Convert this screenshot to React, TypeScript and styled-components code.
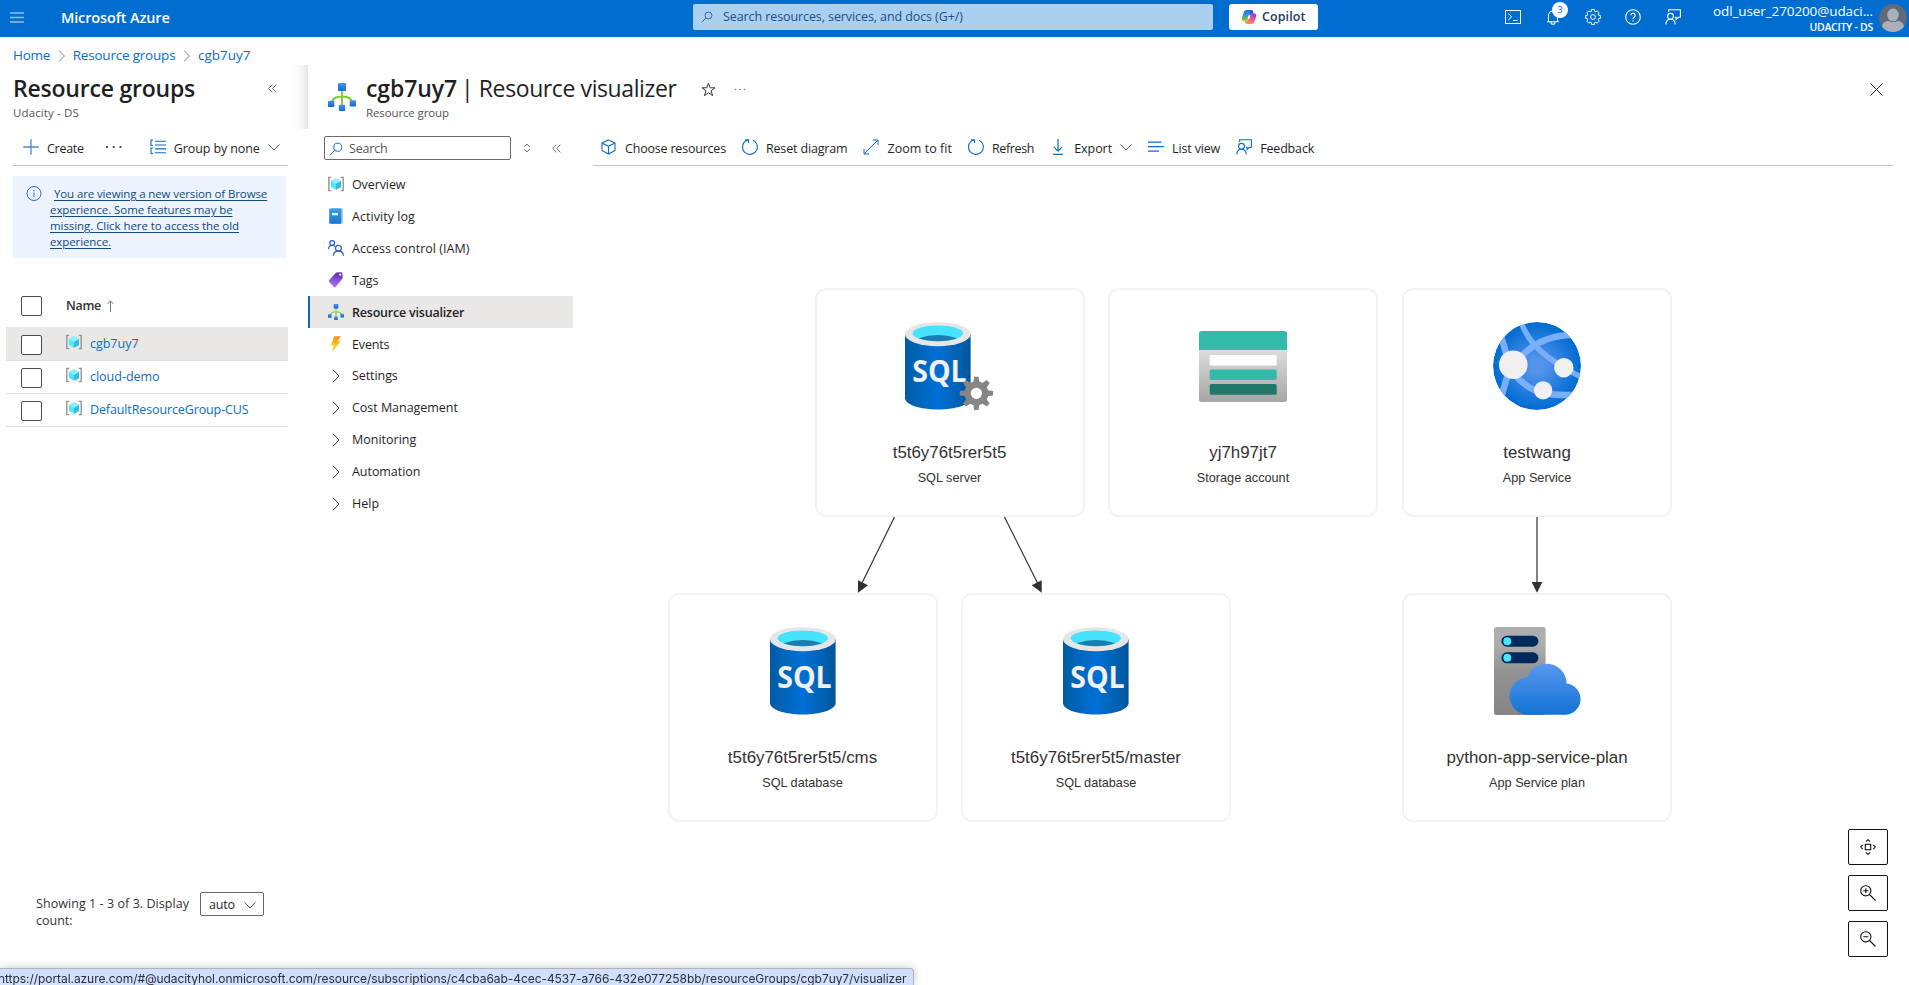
import React from 'react';
import styled, { createGlobalStyle, css } from 'styled-components';

const blue = '#006dd0';
const link = '#0a6cc9';
const ink = '#1f1f1f';
const ui = "'Open Sans', 'Noto Sans', sans-serif";

const Global = createGlobalStyle`
  *, *::before, *::after { box-sizing: border-box; }
  body { margin: 0; background: #fff; color: ${ink}; font: 12.5px/16px ${ui}; overflow: hidden; }
  svg { display: block; flex: none; }
`;

/* ---------- layout ---------- */

const Page = styled.div`
  display: flex;
  flex-direction: column;
  height: 100vh;
  min-height: 985px;
  overflow: hidden;
`;

const Label = styled.span<{ $track?: number }>`
  white-space: nowrap;
  letter-spacing: ${(p) => p.$track ?? 0}px;
`;

/* ---------- top bar ---------- */

const TopBar = styled.header`
  flex: none;
  display: grid;
  grid-template-columns: 693px 520px 1fr;
  height: 37px;
  background: ${blue};
  color: #fff;
`;

const BrandArea = styled.div`
  display: flex;
  align-items: center;
  padding: 0 0 2px 10px;
  gap: 37px;
`;

const Brand = styled(Label)`
  font-size: 14.5px;
  font-weight: 600;
  line-height: 20px;
`;

const GlobalSearch = styled.div`
  display: flex;
  align-items: center;
  gap: 10px;
  height: 26px;
  margin-top: 4px;
  padding-left: 8px;
  border-radius: 2px;
  background: #a9d0f0;
  color: #1c4f86;
`;

const TopActions = styled.div`
  display: flex;
  align-items: flex-start;
  padding: 4px 3px 0 16px;
`;

const CopilotButton = styled.div`
  display: flex;
  align-items: center;
  gap: 5px;
  width: 89px;
  height: 26px;
  padding-left: 12px;
  border-radius: 3px;
  background: #fff;
  color: #243a5e;
  font-weight: 600;
`;

const IconStrip = styled.div`
  display: flex;
  gap: 24px;
  margin: 5px 32px 0 187px;
`;

const BellSlot = styled.div`
  position: relative;
`;

const Badge = styled.span`
  position: absolute;
  left: 7px;
  top: -7px;
  width: 16px;
  height: 16px;
  border-radius: 50%;
  background: #fff;
  color: ${blue};
  font-size: 9.5px;
  line-height: 15px;
  text-align: center;
`;

const Account = styled.div`
  flex: 1;
  display: flex;
  flex-direction: column;
  align-items: flex-end;
  margin: -2px 6px 0 0;
`;

const UserName = styled(Label)`
  font-size: 13.5px;
  line-height: 18px;
`;

const Tenant = styled(Label)`
  font-size: 10.5px;
  font-weight: 600;
  line-height: 14px;
`;

/* ---------- breadcrumb ---------- */

const Breadcrumb = styled.nav`
  flex: none;
  display: flex;
  align-items: center;
  height: 28px;
  padding: 8px 0 0 13px;
  color: ${link};
  font-size: 13.5px;
`;

const CrumbArrow = styled.svg`
  margin: 1px 7px 0 7.500px;
`;

/* ---------- blades ---------- */

const Blades = styled.main`
  flex: 1;
  display: grid;
  grid-template-columns: 308px 1fr;
  min-height: 0;
`;

const Blade = styled.section`
  display: flex;
  flex-direction: column;
  min-width: 0;
`;

const BladeHeader = styled.div<{ $shade?: boolean }>`
  flex: none;
  display: flex;
  height: 64px;
  padding: 8px 0 0 13px;
  ${(p) =>
    p.$shade &&
    css`
      background: linear-gradient(to left, #e4e4e4, #f4f4f4 5px, #fcfcfc 11px, #fff 16px);
    `}
`;

const TitleBlock = styled.div`
  display: flex;
  flex-direction: column;
`;

const Title = styled.h1`
  display: flex;
  gap: 4px;
  margin: 0;
  font-size: 23px;
  font-weight: 600;
  line-height: 31px;
`;

const TitleLight = styled(Label)`
  font-weight: 400;
`;

const Subtitle = styled(Label)`
  margin-top: 1px;
  color: #555;
  font-size: 11.5px;
  line-height: 16px;
`;

const HeaderGlyph = styled.svg<{ $left?: string; $top?: number }>`
  margin-left: ${(p) => p.$left ?? '0'};
  margin-top: ${(p) => p.$top ?? 0}px;
`;

const CommandBar = styled.div<{ $inset?: boolean }>`
  flex: none;
  display: flex;
  align-items: center;
  height: 37px;
  border-bottom: 1px solid #c3c3c3;
  ${(p) =>
    p.$inset
      ? css`
          width: 275px;
          margin-left: 13px;
          padding-left: 10px;
        `
      : css`
          gap: 16px;
          margin-right: 16px;
          padding-left: 8px;
        `}
`;

const Command = styled.div<{ $gap?: number; $indent?: number }>`
  display: flex;
  align-items: center;
  gap: ${(p) => p.$gap ?? 8}px;
  margin-left: ${(p) => p.$indent ?? 0}px;
`;

const CommandLabel = styled(Label)`
  padding-top: 3px;
`;

/* ---------- resource group list ---------- */

const Banner = styled.div`
  flex: none;
  display: flex;
  gap: 8px;
  width: 273px;
  height: 82px;
  margin: 10px 0 0 13px;
  padding: 10px 0 0 13px;
  background: #eef4ff;
`;

const BannerText = styled.a`
  display: flex;
  flex-direction: column;
  color: #0f4a80;
  font-size: 11.5px;
  line-height: 16px;
  text-decoration: underline;
  text-underline-offset: 2px;
`;

const BannerLine = styled(Label)<{ $indent?: boolean }>`
  margin-left: ${(p) => (p.$indent ? 4 : 0)}px;
`;

const Table = styled.div`
  width: 282px;
  margin: 27px 0 0 6px;
`;

const TableHead = styled.div`
  display: flex;
  align-items: center;
  height: 42px;
  padding-left: 15px;
`;

const HeadName = styled(Label)`
  margin: 0 6px 0 24px;
  font-weight: 600;
  color: #333;
`;

const Checkbox = styled.span`
  width: 21px;
  height: 20px;
  border: 1px solid #4a4a4a;
  border-radius: 2px;
  background: #fff;
`;

const TableRow = styled.div<{ $active?: boolean }>`
  display: flex;
  height: ${(p) => (p.$active ? 34 : 33)}px;
  padding: ${(p) => (p.$active ? 8 : 7)}px 0 0 15px;
  border-bottom: 1px solid #e3e2e0;
  background: ${(p) => (p.$active ? '#e9e8e6' : 'transparent')};
`;

const RowIcon = styled.span`
  margin: -1px 8px 0 24px;
`;

const RowLink = styled(Label)`
  color: ${link};
  line-height: 17px;
`;

const Pager = styled.div`
  display: flex;
  gap: 9px;
  margin-top: auto;
  padding: 0 0 56px 36px;
`;

const PagerText = styled.div`
  display: flex;
  flex-direction: column;
  width: 155px;
  color: #333;
  line-height: 17px;
`;

const PageSize = styled.div`
  display: flex;
  align-items: center;
  justify-content: space-between;
  width: 64px;
  height: 24px;
  margin-top: -3px;
  padding: 1px 7px 0 8px;
  border: 1px solid #666;
  border-radius: 2px;
`;

/* ---------- resource menu ---------- */

const BladeBody = styled.div`
  flex: 1;
  display: grid;
  grid-template-columns: 285px 1fr;
  min-height: 0;
`;

const Menu = styled.nav`
  display: flex;
  flex-direction: column;
  padding-top: 7px;
`;

const MenuTools = styled.div`
  display: flex;
  align-items: center;
  margin: 0 0 8px 16px;
`;

const MenuSearch = styled.div`
  display: flex;
  align-items: center;
  gap: 6px;
  width: 187px;
  height: 24px;
  margin-right: 12px;
  padding: 1px 0 0 4px;
  border: 1px solid #6b6b6b;
  border-radius: 2px;
  color: #555;
`;

const MenuItem = styled.div<{ $active?: boolean }>`
  display: flex;
  align-items: center;
  gap: 8px;
  width: 265px;
  height: 32px;
  padding-left: 18px;
  border-left: 2px solid ${(p) => (p.$active ? '#0067c5' : 'transparent')};
  background: ${(p) => (p.$active ? '#e9e8e6' : 'transparent')};
  font-weight: ${(p) => (p.$active ? 600 : 400)};
`;

const MenuLabel = styled(Label)<{ $low?: boolean }>`
  padding-top: ${(p) => (p.$low ? 2 : 0)}px;
`;

/* ---------- diagram ---------- */

const Content = styled.div`
  display: flex;
  flex-direction: column;
  min-width: 0;
`;

const Canvas = styled.div`
  position: relative;
  flex: 1;
`;

const Edges = styled.svg`
  position: absolute;
  inset: 0;
`;

const NodeCard = styled.div<{ $x: number; $y: number }>`
  position: absolute;
  left: ${(p) => p.$x}px;
  top: ${(p) => p.$y}px;
  display: flex;
  flex-direction: column;
  align-items: center;
  width: 270px;
  height: 229px;
  padding-top: 32px;
  border: 2px solid #f3f3f3;
  border-radius: 11px;
  background: #fff;
  color: #323130;
  font-family: 'Liberation Sans', Arial, sans-serif;
`;

const NodeName = styled.div`
  margin-top: 32px;
  font-size: 16.9px;
  line-height: 22px;
`;

const NodeKind = styled.div`
  margin-top: 4px;
  font-size: 12.7px;
  line-height: 20px;
`;

const ZoomControls = styled.div`
  position: absolute;
  right: 21px;
  bottom: 28px;
  display: flex;
  flex-direction: column;
  gap: 10px;
`;

const ZoomButton = styled.div`
  display: grid;
  place-items: center;
  width: 40px;
  height: 36px;
  border: 1px solid #111;
  border-radius: 2px;
  background: #fff;
`;

const StatusBar = styled.div`
  position: fixed;
  left: 0;
  bottom: 0;
  width: 914px;
  height: 17px;
  overflow: hidden;
  border-top: 1px solid #b3b3b3;
  border-right: 1px solid #b3b3b3;
  border-top-right-radius: 4px;
  background: #cfdffd;
  box-shadow: 0 0 10px rgba(0, 0, 0, 0.22);
  color: #2b2f36;
  font: 12px/20px Inter, sans-serif;
`;

const StatusText = styled(Label)`
  margin-left: -2px;
`;

/* ---------- small icons ---------- */

type IconProps = { size?: number; color?: string };

const Line = ({ size = 16, color = link, children, w = 1 }: IconProps & { children: React.ReactNode; w?: number }) => (
  <svg width={size} height={size} viewBox="0 0 16 16" fill="none" stroke={color} strokeWidth={w}>
    {children}
  </svg>
);

const SearchIcon = ({ color, size = 14 }: IconProps) => (
  <Line color={color} size={size} w={1.1}>
    <circle cx="10" cy="6" r="4.6" />
    <path d="M6.7 9.3 1 15" />
  </Line>
);

const Chevron = ({ dir = 'down', size = 12, color = '#444' }: IconProps & { dir?: 'down' | 'right' }) => (
  <Line size={size} color={color} w={(0.95 * 16) / size}>
    <path d={dir === 'down' ? 'M.8 4.5 8 12l7.2-7.5' : 'M5 1.8 11 8l-6 6.2'} />
  </Line>
);

const CollapseIcon = () => (
  <svg width="9" height="9" viewBox="0 0 9 9" fill="none" stroke="#555" strokeWidth="0.9">
    <path d="M4.4.7.7 4.5l3.7 3.8M8.3.7 4.6 4.5l3.7 3.8" />
  </svg>
);

const RefreshIcon = () => (
  <Line w={1.1}>
    <path d="M3 .7h3.500v3.300M6.200.9A7.300 7.300 0 0 0 5 14.700a7.300 7.300 0 0 0 6-13.400" />
  </Line>
);

const FeedbackIcon = ({ color }: IconProps) => (
  <Line color={color} w={1.1}>
    <circle cx="5.5" cy="7.3" r="2.9" />
    <path d="M.8 15.6c.1-3.2 2-5.300 4.700-5.300s4.600 2.100 4.700 5.300M3.600 3V.7h11.800v7.600h-2l-2.300 2.200V8.300H9.800" />
  </Line>
);

const ResourceGroupIcon = () => (
  <svg width="16" height="16" viewBox="0 0 16 16">
    <path d="M3.3 1.400H.8v13.200h2.500M12.700 1.400h2.500v13.200h-2.500" fill="none" stroke="#949494" strokeWidth="1.4" />
    <path d="M8 2.200 13 5v6l-5 2.800L3 11V5z" fill="#50e6ff" />
    <path d="M8 2.200 13 5 8 8 3 5z" fill="#8eeffd" />
    <path d="M13 5v6l-5 2.800V8z" fill="#35bde0" />
  </svg>
);

const VisualizerIcon = ({ size = 16 }: IconProps) => (
  <svg width={size} height={size} viewBox="0 0 16 16">
    <defs>
      <linearGradient id="viz" x1="0" y1="0" x2="0" y2="1">
        <stop offset="0" stopColor="#4a93ee" />
        <stop offset="1" stopColor="#1068d2" />
      </linearGradient>
    </defs>
    <path d="M8 4v9M2 12c.1-3 2.600-4.300 6-4.300s5.900 1.300 6 4.300" fill="none" stroke="#7fce35" strokeWidth="1.1" />
    <rect x="5.700" y="0" width="4.600" height="4.600" rx=".4" fill="url(#viz)" />
    <rect x="0" y="10.100" width="3.600" height="3.600" rx=".4" fill="url(#viz)" />
    <rect x="12.400" y="9.800" width="3.600" height="3.600" rx=".4" fill="url(#viz)" />
    <rect x="6.200" y="12.400" width="3.600" height="3.600" rx=".4" fill="url(#viz)" />
  </svg>
);

const LogIcon = () => (
  <svg width="16" height="16" viewBox="0 0 16 16">
    <defs>
      <linearGradient id="log" x1="0" y1="0" x2="0" y2="1">
        <stop offset="0" stopColor="#3a9ce9" />
        <stop offset="1" stopColor="#1876d0" />
      </linearGradient>
    </defs>
    <path d="M3.5.2h10.300q1 0 1 1v13.600q0 1-1 1H3.500z" fill="#8cc4f0" />
    <rect x="1.200" y=".6" width="12" height="15.200" rx="1" fill="url(#log)" />
    <rect x="4" y="5" width="6" height="2.300" fill="#eef7ff" />
  </svg>
);

const AccessIcon = () => (
  <Line color="#1f5fd0" w={1.2}>
    <circle cx="4.2" cy="3" r="2.4" />
    <circle cx="10.4" cy="8.3" r="2.900" />
    <path d="M.5 9.200C.6 7 2 5.400 4.200 5.400c1.300 0 2.300.6 2.900 1.300M5.400 15.700c.1-2.900 2-4.500 5-4.500s4.900 1.600 5 4.500" />
  </Line>
);

const TagIcon = () => (
  <svg width="16" height="16" viewBox="0 0 16 16">
    <defs>
      <linearGradient id="tag" x1=".7" y1="0" x2=".5" y2="1">
        <stop offset="0" stopColor="#6324b8" />
        <stop offset="1" stopColor="#a67af4" />
      </linearGradient>
    </defs>
    <path d="M1.1 8.300 7.200 1.400q.7-.8 1.700-.9l4-.3q1.200 0 1.400 1.100l.4 3.900q.1 1-.6 1.800l-6.500 8q-.8.9-1.700.1L1.300 10q-.9-.8-.2-1.700z" fill="url(#tag)" />
    <circle cx="12.200" cy="2.700" r="1.100" fill="#fff" />
  </svg>
);

const EventsIcon = () => (
  <svg width="16" height="16" viewBox="0 0 16 16">
    <defs>
      <linearGradient id="bolt" x1="0" y1="0" x2="0" y2="1">
        <stop offset="0" stopColor="#f78d1e" />
        <stop offset=".6" stopColor="#ffc914" />
        <stop offset="1" stopColor="#f9b716" />
      </linearGradient>
    </defs>
    <path d="M6.3.2H13L9.7 5.500h3.100L3.700 15.900l2.600-6.700H2.900z" fill="url(#bolt)" />
  </svg>
);

const cog = (cx: number, cy: number, outer: number, inner: number, teeth: number, tip: number, root: number) => {
  const points: string[] = [];
  for (let i = 0; i < teeth; i++) {
    const mid = (i * 2 * Math.PI) / teeth - Math.PI / 2;
    [
      [inner, -root],
      [outer, -tip],
      [outer, tip],
      [inner, root],
    ].forEach(([r, a]) => points.push(`${(cx + r * Math.cos(mid + a)).toFixed(2)} ${(cy + r * Math.sin(mid + a)).toFixed(2)}`));
  }
  return `M${points.join('L')}Z`;
};

const CopilotIcon = () => (
  <svg width="16" height="16" viewBox="0 0 16 16">
    <defs>
      <linearGradient id="cpA" x1="0" y1="0" x2="0" y2="1">
        <stop offset="0" stopColor="#1f6fe5" />
        <stop offset=".45" stopColor="#2a9bd0" />
        <stop offset=".75" stopColor="#58b957" />
        <stop offset="1" stopColor="#f5c211" />
      </linearGradient>
      <linearGradient id="cpB" x1=".6" y1="0" x2=".3" y2="1">
        <stop offset="0" stopColor="#a03be0" />
        <stop offset=".5" stopColor="#f0568c" />
        <stop offset="1" stopColor="#ff9a3c" />
      </linearGradient>
    </defs>
    <path d="M5.5 1h4.700q1.300 0 1.700 1.400l.6 2.200H10q-1 0-1.300 1L7 10.800q-.5 1.500-1.900 1.500H2.600q-2.100 0-1.800-2.200.5-3.800 2-7.200Q3.600 1 5.500 1z" fill="url(#cpA)" />
    <path d="M10.5 15H5.800q-1.300 0-1.700-1.400l-.4-1.300h1.500q1.300 0 1.700-1.500l1.700-5.200q.4-1 1.400-1h3.400q2.100 0 1.800 2.200-.5 3.200-2 6.400-.8 1.800-2.700 1.800z" fill="url(#cpB)" />
    <path d="M7.6 6.200h1.800l-1.200 4H6.400z" fill="#fff" />
    <path d="M10 1q1.300 0 1.800 1.300l.7 2.300H10q-.9 0-1.300 1z" fill="#254bc6" />
  </svg>
);

/* ---------- resource artwork ---------- */

const Cylinder = ({ id, baseline }: { id: string; baseline: number }) => (
  <>
    <defs>
      <linearGradient id={id}>
        <stop offset="0" stopColor="#005ba1" />
        <stop offset=".1" stopColor="#0060ad" />
        <stop offset=".5" stopColor="#0070d6" />
        <stop offset=".8" stopColor="#0062b4" />
        <stop offset="1" stopColor="#00549a" />
      </linearGradient>
    </defs>
    <path d="M0 12v64c0 6.500 14.700 11.500 32.800 11.500S65.600 82.500 65.600 76V12z" fill={`url(#${id})`} />
    <ellipse cx="32.8" cy="12.2" rx="32.8" ry="12" fill="#e6e6e6" />
    <ellipse cx="32.8" cy="11.3" rx="25.2" ry="7.9" fill="#45e3ff" />
    <path d="M13.5 16.200q19.300-6.500 38.600 0-8 3-19.300 3t-19.300-3z" fill="#1a7fae" />
    <text x="7.2" y={baseline} fontFamily={ui} fontWeight="700" fontSize="30" fill="#f0f0f0" textLength="54.5" lengthAdjust="spacingAndGlyphs">
      SQL
    </text>
  </>
);

const SqlDatabaseArt = () => (
  <svg width="66" height="88" viewBox="0 0 66 88">
    <Cylinder id="db" baseline={60.6} />
  </svg>
);

const SqlServerArt = () => (
  <svg width="89" height="88" viewBox="0 0 89 88">
    <Cylinder id="server" baseline={59.8} />
    <path d={cog(71.4, 71.300, 16.800, 11.500, 8, 0.13, 0.27)} fill="#868686" />
    <circle cx="71.4" cy="71.3" r="12" fill="#868686" />
    <circle cx="71.4" cy="71.3" r="5.6" fill="#fff" />
  </svg>
);

const StorageArt = () => (
  <svg width="88" height="88" viewBox="0 0 88 88">
    <defs>
      <linearGradient id="store" x1="0" y1="0" x2="0" y2="1">
        <stop offset=".2" stopColor="#e2e2e2" />
        <stop offset="1" stopColor="#a6a6a6" />
      </linearGradient>
    </defs>
    <rect y="9" width="88" height="71" rx="2.5" fill="url(#store)" />
    <path d="M0 28V11.500Q0 9 2.500 9h83Q88 9 88 11.500V28z" fill="#32bbab" />
    <rect x="10.7" y="33" width="67" height="10.6" rx="1.5" fill="#fff" />
    <rect x="10.7" y="47.5" width="67" height="10.5" rx="1.5" fill="#32bbab" />
    <rect x="10.7" y="62" width="67" height="10.7" rx="1.5" fill="#22776a" />
  </svg>
);

const AppServiceArt = () => (
  <svg width="88" height="88" viewBox="0 0 88 88">
    <defs>
      <radialGradient id="globe">
        <stop offset=".15" stopColor="#5594ec" />
        <stop offset=".7" stopColor="#1d79db" />
        <stop offset="1" stopColor="#006bd0" />
      </radialGradient>
      <clipPath id="disc">
        <circle cx="44" cy="44" r="44" />
      </clipPath>
    </defs>
    <g clipPath="url(#disc)">
      <circle cx="44" cy="44" r="44" fill="url(#globe)" />
      <g fill="none" stroke="#79aef8" strokeWidth="6.5">
        <path d="M80 13C60 13 42 19 27 36" />
        <path d="M22 53C36 69 50 74 82 73" />
        <path d="M8 14 14 34M15 52 8 76" />
        <path d="M28 0C36 22 52 37 90 56" strokeWidth="5.5" />
      </g>
      <circle cx="20.3" cy="42.7" r="14.3" fill="#f0f0f0" />
      <circle cx="70.8" cy="45.7" r="9.7" fill="#f0f0f0" />
      <circle cx="50.1" cy="68.3" r="9.1" fill="#f0f0f0" />
    </g>
  </svg>
);

const PlanArt = () => (
  <svg width="87" height="88" viewBox="0 0 87 88">
    <defs>
      <linearGradient id="rack" x1="0" y1="0" x2="0" y2="1">
        <stop offset=".2" stopColor="#adadad" />
        <stop offset=".5" stopColor="#939393" />
        <stop offset="1" stopColor="#858585" />
      </linearGradient>
      <linearGradient id="cloud" x1="0" y1="0" x2="0" y2="1">
        <stop offset="0" stopColor="#5a98ef" />
        <stop offset="1" stopColor="#1272d4" />
      </linearGradient>
    </defs>
    <rect width="51.6" height="88" rx="2.5" fill="url(#rack)" />
    <rect x="7.4" y="8.7" width="37" height="11" rx="5.5" fill="#002a5c" />
    <rect x="7.4" y="25.3" width="37" height="11" rx="5.5" fill="#002a5c" />
    <circle cx="13.3" cy="14.2" r="4" fill="#4be4ff" />
    <circle cx="13.3" cy="30.8" r="4" fill="#4be4ff" />
    <path d="M35.2 87.800A18.800 18.800 0 0 1 33.500 50.200 20.100 20.100 0 0 1 72.600 56.500 15.700 15.700 0 0 1 71.200 87.800z" fill="url(#cloud)" />
  </svg>
);

/* ---------- data ---------- */

const groups = [
  { name: 'cgb7uy7', track: -0.02, active: true },
  { name: 'cloud-demo', track: -0.02 },
  { name: 'DefaultResourceGroup-CUS', track: -0.12 },
];

const menu: { text: string; track: number; icon?: React.ReactNode; active?: boolean }[] = [
  { text: 'Overview', track: -0.1, icon: <ResourceGroupIcon /> },
  { text: 'Activity log', track: 0.04, icon: <LogIcon /> },
  { text: 'Access control (IAM)', track: 0.04, icon: <AccessIcon /> },
  { text: 'Tags', track: 0, icon: <TagIcon /> },
  { text: 'Resource visualizer', track: -0.2, icon: <VisualizerIcon />, active: true },
  { text: 'Events', track: -0.15, icon: <EventsIcon /> },
  { text: 'Settings', track: -0.08 },
  { text: 'Cost Management', track: -0.03 },
  { text: 'Monitoring', track: 0 },
  { text: 'Automation', track: -0.05 },
  { text: 'Help', track: 0 },
];

const commands: { text: string; track: number; icon: React.ReactNode; drop?: boolean }[] = [
  {
    text: 'Choose resources',
    track: -0.2,
    icon: (
      <Line w={1.1}>
        <path d="M7.5.9 14 4v7.500l-6.500 3.600L1 11.500V4zM1 4l6.500 3.300L14 4M7.500 7.300v7.800" />
      </Line>
    ),
  },
  { text: 'Reset diagram', track: -0.16, icon: <RefreshIcon /> },
  {
    text: 'Zoom to fit',
    track: 0.04,
    icon: (
      <Line>
        <path d="M1 15 15 1M9.800 1H15v5.200M6.200 15H1V9.800" />
      </Line>
    ),
  },
  { text: 'Refresh', track: -0.36, icon: <RefreshIcon /> },
  {
    text: 'Export',
    track: -0.04,
    drop: true,
    icon: (
      <Line w={1.2}>
        <path d="M8 0v12M3.800 7.900 8 12.100l4.200-4.200M3 15.300h10" />
      </Line>
    ),
  },
  {
    text: 'List view',
    track: -0.16,
    icon: (
      <Line w={1.3}>
        <path d="M0 3.200h13.500M0 7.700h16M0 12.200h11" />
      </Line>
    ),
  },
  { text: 'Feedback', track: -0.16, icon: <FeedbackIcon /> },
];

const nodes = [
  { name: 't5t6y76t5rer5t5', kind: 'SQL server', x: 221.5, y: 122, art: <SqlServerArt /> },
  { name: 'yj7h97jt7', kind: 'Storage account', x: 515, y: 122, art: <StorageArt /> },
  { name: 'testwang', kind: 'App Service', x: 809, y: 122, art: <AppServiceArt /> },
  { name: 't5t6y76t5rer5t5/cms', kind: 'SQL database', x: 74.5, y: 427, art: <SqlDatabaseArt /> },
  { name: 't5t6y76t5rer5t5/master', kind: 'SQL database', x: 368, y: 427, art: <SqlDatabaseArt /> },
  { name: 'python-app-service-plan', kind: 'App Service plan', x: 809, y: 427, art: <PlanArt /> },
];

export default function App() {
  return (
    <Page>
      <Global />
      <TopBar>
        <BrandArea>
          <svg width="14" height="11" viewBox="0 0 14 11" fill="none" stroke="#8fc0ee" strokeWidth="1.6">
            <path d="M0 1h14M0 5.500h14M0 10h14" />
          </svg>
          <Brand $track={-0.14}>Microsoft Azure</Brand>
        </BrandArea>
        <GlobalSearch>
          <SearchIcon color="#1c4f86" size={12} />
          <Label $track={-0.09}>Search resources, services, and docs (G+/)</Label>
        </GlobalSearch>
        <TopActions>
          <CopilotButton>
            <CopilotIcon />
            <Label $track={0.09}>Copilot</Label>
          </CopilotButton>
          <IconStrip>
            <Line color="#fff">
              <rect x=".5" y="1.5" width="15" height="13" />
              <path d="m3.2 4.500 3.500 3.300-3.500 3.300M8 11.500h4.500" />
            </Line>
            <BellSlot>
              <Line color="#fff" w={1.1}>
                <path d="M2 12.800h12M3.500 12.800V6.500a4.500 4.500 0 0 1 9 0v6.300M6 13.300a2 2 0 0 0 4 0" />
              </Line>
              <Badge>3</Badge>
            </BellSlot>
            <Line color="#fff">
              <path d={cog(8, 8, 7.5, 5.9, 8, 0.2, 0.27)} strokeLinejoin="round" />
              <circle cx="8" cy="8" r="2.4" />
            </Line>
            <Line color="#fff" w={1.1}>
              <circle cx="8" cy="8" r="7.3" />
              <path d="M5.800 6.300a2.200 2.200 0 1 1 3.300 2c-.8.500-1.100.9-1.100 1.700M8 11.200v1.300" />
            </Line>
            <FeedbackIcon color="#fff" />
          </IconStrip>
          <Account>
            <UserName $track={-0.1}>odl_user_270200@udaci...</UserName>
            <Tenant $track={-0.27}>UDACITY - DS</Tenant>
          </Account>
          <svg width="28" height="28" viewBox="0 0 28 28">
            <clipPath id="face">
              <circle cx="14" cy="14" r="14" />
            </clipPath>
            <g clipPath="url(#face)">
              <rect width="28" height="28" fill="#5f6b7a" />
              <ellipse cx="14" cy="11" rx="5.8" ry="6.5" fill="#a9b0b8" />
              <path d="M3 24c0-5 3-7 6.500-7q4.500 2.600 9 0c3.500 0 6.500 2 6.500 7l-6 4H9z" fill="#a9b0b8" />
            </g>
          </svg>
        </TopActions>
      </TopBar>

      <Breadcrumb>
        <Label $track={-0.25}>Home</Label>
        <CrumbArrow width="8" height="12" viewBox="0 0 8 12" fill="none" stroke="#888">
          <path d="m1 .7 5.500 5.300L1 11.300" />
        </CrumbArrow>
        <Label $track={-0.2}>Resource groups</Label>
        <CrumbArrow width="8" height="12" viewBox="0 0 8 12" fill="none" stroke="#888">
          <path d="m1 .7 5.500 5.300L1 11.300" />
        </CrumbArrow>
        <Label>cgb7uy7</Label>
      </Breadcrumb>

      <Blades>
        <Blade>
          <BladeHeader $shade>
            <TitleBlock>
              <Title>
                <Label $track={-0.21}>Resource groups</Label>
              </Title>
              <Subtitle $track={0.13}>Udacity - DS</Subtitle>
            </TitleBlock>
            <HeaderGlyph as="div" $left="73px" $top={11}>
              <CollapseIcon />
            </HeaderGlyph>
          </BladeHeader>
          <CommandBar $inset>
            <Command>
              <Line w={1.3} color="#3f8fd8">
                <path d="M8 .3v15.400M.3 8h15.400" />
              </Line>
              <CommandLabel $track={-0.28}>Create</CommandLabel>
            </Command>
            <Command $indent={21}>
              <svg width="18" height="4" viewBox="0 0 18 4" fill="#333">
                <circle cx="2" cy="2" r="1.1" />
                <circle cx="8.7" cy="2" r="1.1" />
                <circle cx="15.4" cy="2" r="1.1" />
              </svg>
            </Command>
            <Command $indent={27}>
              <Line w={1.1}>
                <path d="M5 2.300h11M5 6h11M5 9.900h11M5 13.700h11M3 1H1v5.500h2M3 9H1v5.500h2" />
              </Line>
              <CommandLabel $track={-0.1}>Group by none</CommandLabel>
              <Chevron />
            </Command>
          </CommandBar>
          <Banner>
            <Line color="#2a62d8">
              <circle cx="8" cy="7.5" r="7" />
              <path d="M8 6.500v4.500M8 4v1.300" />
            </Line>
            <BannerText>
              <BannerLine $indent $track={-0.12}>You are viewing a new version of Browse</BannerLine>
              <BannerLine $track={-0.08}>experience. Some features may be</BannerLine>
              <BannerLine $track={-0.06}>missing. Click here to access the old</BannerLine>
              <BannerLine $track={-0.1}>experience.</BannerLine>
            </BannerText>
          </Banner>
          <Table>
            <TableHead>
              <Checkbox />
              <HeadName $track={-0.29}>Name</HeadName>
              <svg width="7" height="12" viewBox="0 0 7 12" fill="none" stroke="#777">
                <path d="M3.500 12V1M.6 3.800 3.500.9l2.900 2.900" />
              </svg>
            </TableHead>
            {groups.map((g) => (
              <TableRow key={g.name} $active={g.active}>
                <Checkbox />
                <RowIcon>
                  <ResourceGroupIcon />
                </RowIcon>
                <RowLink $track={g.track}>{g.name}</RowLink>
              </TableRow>
            ))}
          </Table>
          <Pager>
            <PagerText>
              <Label $track={0.06}>Showing 1 - 3 of 3. Display</Label>
              <Label>count:</Label>
            </PagerText>
            <PageSize>
              <Label $track={-0.2}>auto</Label>
              <Chevron />
            </PageSize>
          </Pager>
        </Blade>

        <Blade>
          <BladeHeader>
            <HeaderGlyph as="div" $left="7px" $top={10}>
              <VisualizerIcon size={28} />
            </HeaderGlyph>
            <HeaderGlyph as="div" $left="10px">
              <TitleBlock>
                <Title>
                  <Label $track={-0.1}>cgb7uy7</Label>
                  <TitleLight $track={-0.4}>| Resource visualizer</TitleLight>
                </Title>
                <Subtitle $track={-0.12}>Resource group</Subtitle>
              </TitleBlock>
            </HeaderGlyph>
            <HeaderGlyph $left="25px" $top={9} width="15" height="15" viewBox="0 0 15 15" fill="none" stroke="#333">
              <path d="m7.500 1.200 1.700 4.600h4.800l-3.900 3 1.500 4.900-4.100-3-4.100 3 1.500-4.900-3.900-3h4.800z" />
            </HeaderGlyph>
            <HeaderGlyph $left="18px" $top={15} width="12" height="3" viewBox="0 0 12 3" fill="#777">
              <circle cx="1.5" cy="1.5" r=".8" />
              <circle cx="6" cy="1.5" r=".8" />
              <circle cx="10.5" cy="1.5" r=".8" />
            </HeaderGlyph>
            <HeaderGlyph $left="auto" $top={9.5} width="39" height="13" viewBox="0 0 39 13" fill="none" stroke="#222">
              <path d="m.5.500 12 12M12.500.500l-12 12" />
            </HeaderGlyph>
          </BladeHeader>
          <BladeBody>
            <Menu>
              <MenuTools>
                <MenuSearch>
                  <SearchIcon />
                  <Label $track={-0.18}>Search</Label>
                </MenuSearch>
                <svg width="8" height="10" viewBox="0 0 8 10" fill="none" stroke="#666">
                  <path d="M1.200 3.900 4 1.200l2.800 2.700M1.200 6.100 4 8.800l2.800-2.700" />
                </svg>
                <HeaderGlyph as="div" $left="21px">
                  <CollapseIcon />
                </HeaderGlyph>
              </MenuTools>
              {menu.map((m) => (
                <MenuItem key={m.text} $active={m.active}>
                  {m.icon ?? <Chevron dir="right" size={16} color="#333" />}
                  <MenuLabel $track={m.track} $low={!!m.icon}>
                    {m.text}
                  </MenuLabel>
                </MenuItem>
              ))}
            </Menu>
            <Content>
              <CommandBar>
                {commands.map((c) => (
                  <Command key={c.text}>
                    {c.icon}
                    <CommandLabel $track={c.track}>{c.text}</CommandLabel>
                    {c.drop && <Chevron />}
                  </Command>
                ))}
              </CommandBar>
              <Canvas>
                {nodes.map((n) => (
                  <NodeCard key={n.name} $x={n.x} $y={n.y}>
                    {n.art}
                    <NodeName>{n.name}</NodeName>
                    <NodeKind>{n.kind}</NodeKind>
                  </NodeCard>
                ))}
                <Edges width="1300" height="480" fill="#323130" stroke="#323130" strokeWidth="1.2">
                  <path d="M301.500 351 267.500 420M411.500 351 446 420M944 351v66" />
                  <g stroke="none">
                    <path d="M265 426.800v-12.500l10 5z" />
                    <path d="M448.700 426.800v-12.500l-10 5z" />
                    <path d="M944 426.800 938.600 416h10.800z" />
                  </g>
                </Edges>
                <ZoomControls>
                  <ZoomButton>
                    <Line color="#111" w={1.1}>
                      <rect x="5.3" y="5.3" width="5.4" height="5.4" />
                      <path d="M5.800 2.700 8 .7l2.200 2M5.800 13.300l2.200 2 2.200-2M2.700 5.800.7 8l2 2.200M13.300 5.800l2 2.200-2 2.200" />
                    </Line>
                  </ZoomButton>
                  <ZoomButton>
                    <Line color="#111" w={1.1}>
                      <circle cx="5.8" cy="5.8" r="5.1" />
                      <path d="m9.500 9.500 6 6M3.300 5.800h5M5.800 3.300v5" />
                    </Line>
                  </ZoomButton>
                  <ZoomButton>
                    <Line color="#111" w={1.1}>
                      <circle cx="5.8" cy="5.8" r="5.1" />
                      <path d="m9.500 9.500 6 6M3.300 5.800h5" />
                    </Line>
                  </ZoomButton>
                </ZoomControls>
              </Canvas>
            </Content>
          </BladeBody>
        </Blade>
      </Blades>
      <StatusBar>
        <StatusText $track={-0.06}>
          https://portal.azure.com/#@udacityhol.onmicrosoft.com/resource/subscriptions/c4cba6ab-4cec-4537-a766-432e077258bb/resourceGroups/cgb7uy7/visualizer
        </StatusText>
      </StatusBar>
    </Page>
  );
}
